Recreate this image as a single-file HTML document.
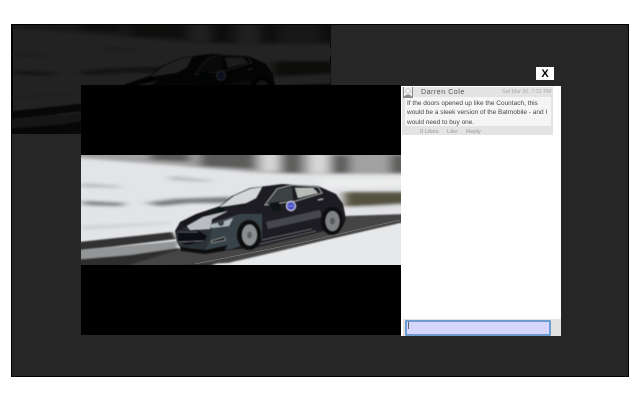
<!DOCTYPE html>
<html><head><meta charset="utf-8"><style>
html,body{margin:0;padding:0;background:#fff;width:640px;height:400px;overflow:hidden;font-family:"Liberation Sans",sans-serif}
div,svg{position:absolute}
</style></head><body>
<svg width="0" height="0" style="left:0;top:0">
<defs>
<filter id="b3" x="-10%" y="-50%" width="120%" height="200%"><feGaussianBlur stdDeviation="5 1.500"/></filter>
<filter id="b1" x="-5%" y="-20%" width="110%" height="140%"><feGaussianBlur stdDeviation="1.500 .8"/></filter>
<filter id="s" x="-5%" y="-5%" width="110%" height="110%"><feGaussianBlur stdDeviation=".45"/></filter>
<symbol id="scene" viewBox="81 155 320 110">
<rect x="81" y="155" width="320" height="110" fill="#e2e4e7"/>
<g filter="url(#b3)">
<path d="M70 150H410V174H300L250 172 170 165 81 158 70 157Z" fill="#a2a2a2"/>
<path d="M150 150H190V162L150 160ZM200 150H255V169L200 166ZM282 152H302V173H282ZM332 155H350V173H332ZM390 155H410V173H390Z" fill="#5c5c5a"/>
<path d="M262 153H278V171H262ZM310 153H328V173H310Z" fill="#d8d8d8"/>
<path d="M81 183 120 186 120 188 81 187ZM170 176 210 180 210 182 170 180Z" fill="#b6b8ba"/>
<path d="M81 201 125 203 122 206 85 205ZM145 203 175 199 232 197 236 203 190 203 160 206Z" fill="#747678"/>
<path d="M344 192H410V205L344 207Z" fill="#55533f"/>
<path d="M320 178H410V186L320 188Z" fill="#eceded"/>
<path d="M346 208 405 204V212L346 216Z" fill="#e2e3e5"/>
<path d="M81 226 170 222V224L81 230Z" fill="#cdcfd1"/>
</g>
<g filter="url(#b1)">
<path d="M70 243 172 232 176 239 110 247 70 251Z" fill="#323232"/>
<path d="M70 251 178 241 176 252 120 259 70 262Z" fill="#939597"/>
<path d="M70 260 130 255 178 248 220 262 200 270 70 270Z" fill="#2e2e2e"/>
<path d="M346 216 405 214V223L320 242 245 262 120 268 178 250Z" fill="#444444"/>
</g>
<path d="M232 262 405 222V270H225Z" fill="#e6e8ea" filter="url(#b1)"/>
<path d="M195 264 300 243 400 220" stroke="#cfcfcf" stroke-width=".5" fill="none" opacity=".55"/>
<g filter="url(#s)">
<path d="M175 231 180 222 196 214 220 206 232 196 250 188 282 184 318 186 336 194 343 204 346 219 343 226 320 232 258 247 205 253 181 249 177 242Z" fill="#1e1f22"/>
<path d="M207 224 240 214 262 214 262 238 232 249 205 251Z" fill="#39424a"/>
<path d="M176 232 190 226 212 228 210 240 205 251 181 248 177 242Z" fill="#2c3136"/>
<path d="M187 226 203 217 228 211 212 219 210 229 190 230Z" fill="#b9bdc1"/>
<path d="M180 223 196 215 217 209 220 210 197 218 184 226Z" fill="#16171a"/>
<path d="M220 207 234 196 250 189 262 187 256 198 246 203Z" fill="#d4d7d9"/>
<path d="M268 203 277 190 292 187 293 200Z" fill="#3a4242"/>
<path d="M295 188 313 188 318 193 298 198Z" fill="#b7bbb8"/>
<path d="M265 205 277 189 292 185 318 187 322 193 296 201Z" fill="none" stroke="#a8aaac" stroke-width=".8"/>
<path d="M212 212 220 207 225 207 224 212 216 213Z" fill="#111214"/>
<path d="M269 204 279 202 281 210 272 211Z" fill="#111214"/>
<path d="M208 225 222 222 233 218 229 226 212 228Z" fill="#aab3ba"/>
<circle cx="221" cy="223" r="3" fill="#3a4045"/>
<path d="M178 231 198 230 207 236 204 242 186 245 178 241Z" fill="#0f1012"/>
<path d="M178 242 204 241M178 232 198 232" stroke="#8d9295" stroke-width=".5"/>
<path d="M211 241 224 237 226 240 212 243Z" fill="#1c1f23" stroke="#b4b8ba" stroke-width=".5"/>
<path d="M180 247 205 250 228 245 224 251 205 254 181 251Z" fill="#0c0d0e"/>
<path d="M266 222 320 210 322 217 268 229Z" fill="#44474d"/>
<path d="M262 240 312 229M260 244 316 231" stroke="#6a6e72" stroke-width=".7" fill="none"/>
<path d="M318 200 323 199" stroke="#bbb" stroke-width="1"/>
</g>
<g filter="url(#s)">
<ellipse cx="249" cy="235" rx="12" ry="15" fill="#0a0a0b"/>
<ellipse cx="249.500" cy="235" rx="7.500" ry="10.500" fill="#8c8f91"/>
<ellipse cx="249.500" cy="235" rx="2.500" ry="3.500" fill="#5f6264"/>
<ellipse cx="332" cy="221" rx="11" ry="14" fill="#0a0a0b"/>
<ellipse cx="332.500" cy="221" rx="7" ry="10" fill="#7f8284"/>
<ellipse cx="332.500" cy="221" rx="2.500" ry="3.500" fill="#585b5d"/>
<circle cx="291" cy="206" r="5.200" fill="#cfd0ea"/>
<circle cx="291" cy="206" r="4" fill="#4a4fc4"/>
<path d="M288 206H294" stroke="#8f96e6" stroke-width=".8"/>
</g>
</symbol>
</defs>
</svg>

<div style="left:11px;top:24px;width:616px;height:351px;border:1px solid #000;background:#262626"></div>
<div style="left:12px;top:25px;width:319px;height:109px;background:#000"></div>
<svg style="left:12px;top:25px;opacity:.15" width="319" height="109"><use href="#scene" width="319" height="109"/></svg>

<div style="left:81px;top:85px;width:320px;height:250px;background:#000"></div>
<svg style="left:81px;top:155px" width="320" height="110"><use href="#scene" width="320" height="110"/></svg>

<div style="left:401px;top:86px;width:160px;height:250px;background:#fff"></div>

<div style="left:536px;top:67px;width:18px;height:13px;background:#fff;color:#000;font:bold 11px/14px 'Liberation Sans',sans-serif;text-align:center">X</div>

<div style="left:402px;top:87px;width:151px;height:48px;background:#e3e3e3"></div>
<div style="left:405px;top:97px;width:146px;height:29px;background:#f5f5f5"></div>
<svg style="left:403px;top:87px" width="10" height="11" viewBox="0 0 10 11"><rect width="10" height="11" fill="#8a8a8a"/><rect x="1" y="0" width="8" height="10" fill="#efefef"/><circle cx="5" cy="4" r="2.400" fill="#efefef" stroke="#999" stroke-width=".5"/><path d="M1 10C2 7 8 7 9 10Z" fill="#888"/></svg>
<div style="left:421px;top:88px;font-size:7px;line-height:9px;letter-spacing:.55px;color:#555;white-space:nowrap">Darren Cole</div>
<div style="left:502px;top:88px;font-size:5.400px;line-height:8px;color:#aaa;white-space:nowrap">Sat Mar 30, 7:31 PM</div>
<div style="left:407px;top:98.500px;width:146px;font-size:6.500px;line-height:9.500px;color:#444;white-space:nowrap">If the doors opened up like the Countach, this<br>would be a sleek version of the Batmobile - and I<br>would need to buy one.</div>
<div style="left:420px;top:127.500px;font-size:5.800px;line-height:8px;color:#999;white-space:nowrap">0 Likes</div>
<div style="left:447px;top:127.500px;font-size:5.800px;line-height:8px;color:#999;white-space:nowrap">Like</div>
<div style="left:466px;top:127.500px;font-size:5.800px;line-height:8px;color:#999;white-space:nowrap">Reply</div>

<div style="left:403px;top:319px;width:158px;height:17px;background:#e2e2e2"></div>
<div style="left:405px;top:320px;width:142px;height:12px;background:#d6d6ff;border:2px solid #6f9cd0;border-radius:1px"></div>
<div style="left:408px;top:322px;width:1px;height:7px;background:#666"></div>
</body></html>
